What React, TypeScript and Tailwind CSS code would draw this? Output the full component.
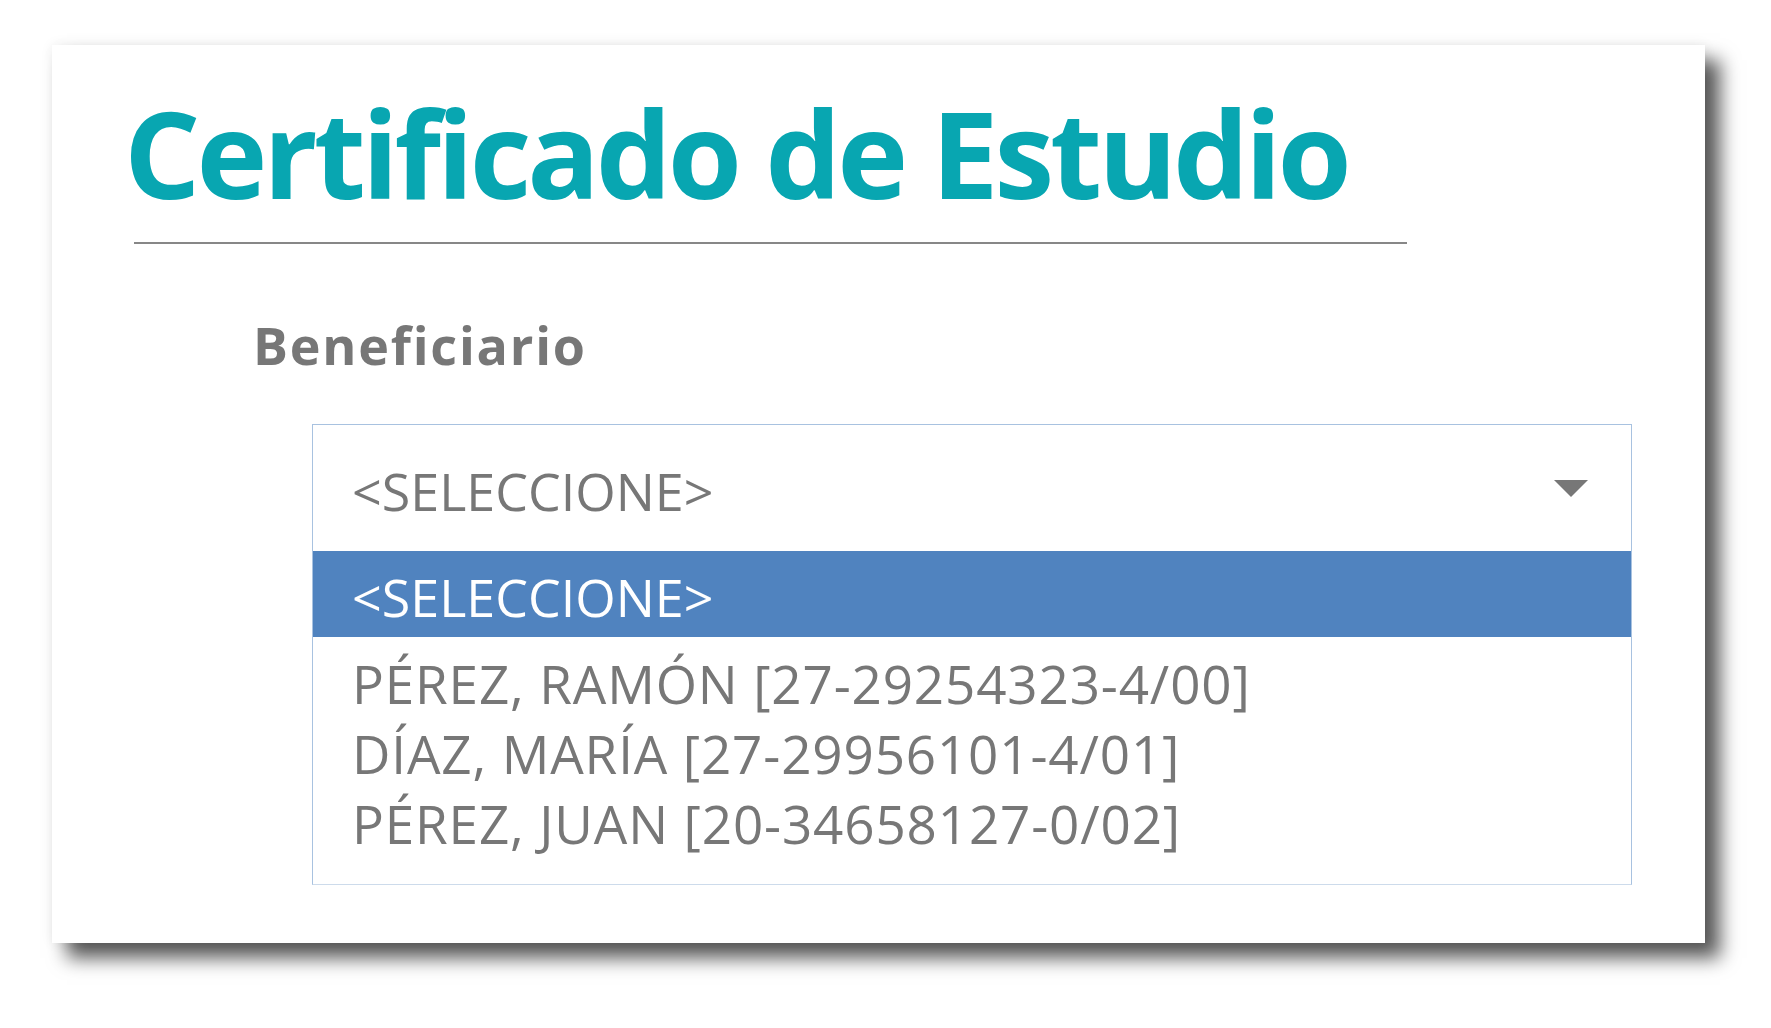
const beneficiarios = [
  'PÉREZ, RAMÓN [27-29254323-4/00]',
  'DÍAZ, MARÍA [27-29956101-4/01]',
  'PÉREZ, JUAN [20-34658127-0/02]',
];

export default function App() {
  return (
    <div className="min-h-screen w-full bg-white pl-[52px] pt-[45px] font-['Open_Sans',sans-serif]">
      <div className="w-[1653px] h-[898px] bg-white shadow-[15px_15px_18px_rgba(0,0,0,0.66),0_0_12px_rgba(0,0,0,0.07)]">
        {/* Título */}
        <h1 className="pl-[72px] pt-[48px] text-[120px] leading-none font-bold tracking-[-4px] text-[#08a6b1]">
          Certificado de Estudio
        </h1>
        <div className="ml-[82px] mt-[29px] w-[1273px] h-[2px] bg-[#878787]" />

        <div className="pl-[201px] pt-[75px]">
          <h2 className="text-[52px] leading-none font-bold tracking-[1.8px] text-[#777777]">Beneficiario</h2>
        </div>

        {/* Select abierto */}
        <div className="ml-[260px] mt-[53px] w-[1320px] border border-[#a8c2e0] border-b-[#cddbeb] text-[52px] leading-none text-[#777777]">
          <div className="h-[126px] flex items-center justify-between pl-[39px] pr-[43px]">
            <span className="pt-[6px]">&lt;SELECCIONE&gt;</span>
            <svg width="34" height="17" viewBox="0 0 34 17">
              <polygon points="0,0 34,0 17,17" fill="#777777" />
            </svg>
          </div>
          <ul className="pb-[26px]">
            <li className="h-[86px] flex items-center pl-[39px] pt-[6px] bg-[#5083bf] text-white">&lt;SELECCIONE&gt;</li>
            <li className="h-[11px]" />
            {beneficiarios.map((b) => (
              <li key={b} className="h-[70px] flex items-center pl-[39px] text-[53px] tracking-[0.85px]">
                {b}
              </li>
            ))}
          </ul>
        </div>
      </div>
    </div>
  );
}
